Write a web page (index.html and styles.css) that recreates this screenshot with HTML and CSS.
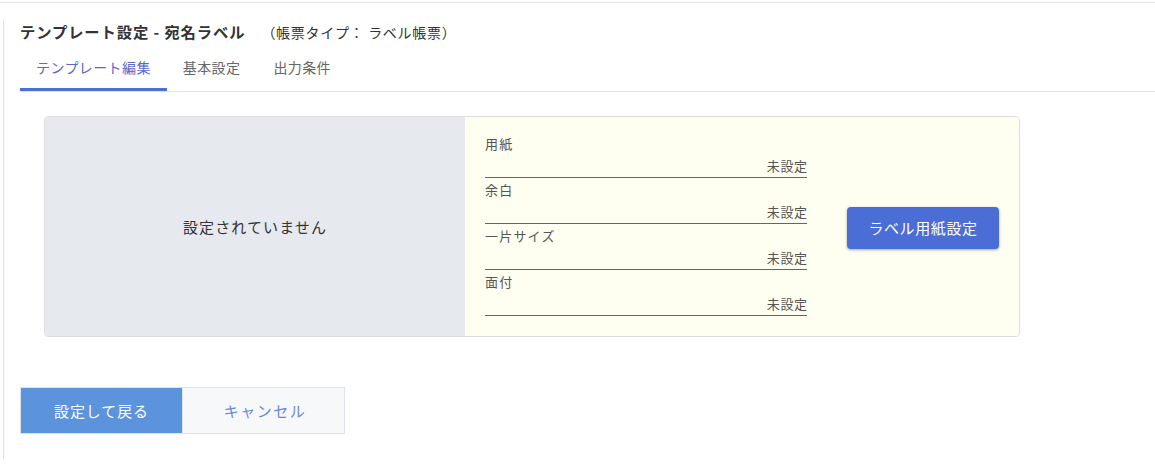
FILE: index.html
```html
<!DOCTYPE html>
<html lang="ja">
<head>
<meta charset="utf-8">
<title>テンプレート設定 - 宛名ラベル</title>
<link rel="stylesheet" href="styles.css">
</head>
<body>
<div class="page">
  <div class="main">
    <div class="title-row">
      <h1 class="title">テンプレート設定 - 宛名ラベル</h1>
      <span class="subtitle">（帳票タイプ： ラベル帳票）</span>
    </div>
    <div class="tabs">
      <div class="tab active">テンプレート編集</div>
      <div class="tab">基本設定</div>
      <div class="tab">出力条件</div>
    </div>
    <div class="card">
      <div class="preview">設定されていません</div>
      <div class="settings">
        <div class="fields">
          <div class="field">
            <div class="field-label">用紙</div>
            <div class="field-value">未設定</div>
          </div>
          <div class="field">
            <div class="field-label">余白</div>
            <div class="field-value">未設定</div>
          </div>
          <div class="field">
            <div class="field-label">一片サイズ</div>
            <div class="field-value">未設定</div>
          </div>
          <div class="field">
            <div class="field-label">面付</div>
            <div class="field-value">未設定</div>
          </div>
        </div>
        <button class="btn-label">ラベル用紙設定</button>
      </div>
    </div>
    <div class="actions">
      <button class="btn btn-primary">設定して戻る</button>
      <button class="btn btn-cancel">キャンセル</button>
    </div>
  </div>
</div>
</body>
</html>
```

FILE: styles.css
```css
html, body {
  margin: 0;
  padding: 0;
  background: #ffffff;
}
body {
  font-family: "Noto Sans CJK JP", "Noto Sans", sans-serif;
  color: #333333;
  overflow: hidden;
}
.page {
  margin-top: 2px;
  border-top: 1px solid #e4e4e4;
}
.main {
  margin-top: 16px;
  margin-left: 3px;
  border-left: 1px solid #e4e4e4;
  padding-left: 16px;
  padding-bottom: 25px;
}
.title-row {
  display: flex;
  align-items: baseline;
  padding-top: 1px;
  height: 22px;
}
.title {
  margin: 0;
  font-size: 15.3px;
  font-weight: 700;
  line-height: 22px;
  letter-spacing: 0.9px;
  color: #333333;
}
.subtitle {
  margin-left: 16px;
  font-size: 14px;
  line-height: 22px;
  letter-spacing: 0.7px;
  color: #333333;
}
.tabs {
  display: flex;
  margin-top: 1px;
  height: 48px;
  border-bottom: 1px solid #e2e2e2;
}
.tab {
  display: flex;
  align-items: center;
  padding: 2px 16px 0;
  font-size: 14px;
  letter-spacing: 0.4px;
  color: #666666;
  border-bottom: 3px solid transparent;
}
.tab + .tab {
  padding: 2px 17px 0 16px;
}
.tab.active {
  color: #5b68c9;
  border-bottom-color: #4b6ed8;
}
.card {
  display: flex;
  width: 974px;
  height: 219px;
  margin: 24px 0 0 24px;
  border: 1px solid #dddddd;
  border-radius: 4px;
  overflow: hidden;
}
.preview {
  width: 420px;
  flex: none;
  display: flex;
  align-items: center;
  justify-content: center;
  background: #e6e9ee;
  font-size: 15px;
  letter-spacing: 1.1px;
  color: #333333;
}
.settings {
  flex: 1;
  display: flex;
  align-items: center;
  background: #fefef1;
  padding-left: 20px;
}
.fields {
  width: 322px;
  align-self: flex-start;
  padding-top: 15px;
}
.field {
  padding-top: 1px;
  border-bottom: 1px solid #666666;
}
.field-label {
  font-size: 13px;
  line-height: 22px;
  letter-spacing: 1.2px;
  color: #555555;
}
.field-value {
  font-size: 13px;
  line-height: 22px;
  text-align: right;
  letter-spacing: 0.6px;
  margin-right: -0.6px;
  color: #555555;
}
.btn-label {
  margin-left: 40px;
  width: 152px;
  height: 42px;
  border: none;
  border-radius: 4px;
  background: #4a6dd6;
  color: #ffffff;
  font-family: inherit;
  font-size: 15px;
  letter-spacing: 0.6px;
  box-shadow: 0 1px 3px rgba(0, 0, 0, 0.35);
  margin-top: 2px;
}
.actions {
  display: flex;
  margin-top: 50px;
}
.btn {
  width: 163px;
  height: 47px;
  border: 1px solid #dfe3ea;
  font-family: inherit;
  font-size: 15px;
  padding: 0;
}
.btn-primary {
  background: #5b93dc;
  color: #ffffff;
  letter-spacing: 0.9px;
}
.btn-cancel {
  margin-left: -1px;
  padding-left: 3px;
  background: #f7f8fa;
  color: #6b86d6;
  letter-spacing: 1.5px;
}
```
